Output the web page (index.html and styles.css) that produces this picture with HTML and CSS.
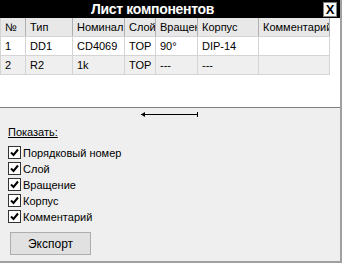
FILE: index.html
```html
<!DOCTYPE html>
<html lang="ru">
<head>
    <meta charset="UTF-8">
    <title>Лист компонентов</title>
    <link rel="stylesheet" href="styles.css">
</head>
<body>
    <div class="window">
        <div class="titlebar">
            <div class="title">Лист компонентов</div>
            <button class="close">X</button>
        </div>

        <div class="table-area">
            <table class="grid">
                <colgroup>
                    <col style="width:25px">
                    <col style="width:47px">
                    <col style="width:52px">
                    <col style="width:31px">
                    <col style="width:42px">
                    <col style="width:61px">
                    <col style="width:71px">
                </colgroup>
                <tr class="head">
                    <td>№</td><td>Тип</td><td>Номинал</td><td>Слой</td><td>Вращение</td><td>Корпус</td><td>Комментарий</td>
                </tr>
                <tr>
                    <td>1</td><td>DD1</td><td>CD4069</td><td>TOP</td><td>90°</td><td>DIP-14</td><td></td>
                </tr>
                <tr class="alt">
                    <td>2</td><td>R2</td><td>1k</td><td>TOP</td><td>---</td><td>---</td><td></td>
                </tr>
            </table>
        </div>

        <div class="panel">
            <div class="splitter">
                <svg width="60" height="7" viewBox="0 0 60 7">
                    <path d="M1 3.5 H58" stroke="#000" stroke-width="1"/>
                    <path d="M1 3.5 L5 1 V6 Z" fill="#000"/>
                    <path d="M57.5 1 V6" stroke="#000" stroke-width="1"/>
                </svg>
            </div>

            <div class="show-label">Показать:</div>

            <div class="options">
                <label class="opt"><span class="box"><svg width="11" height="11" viewBox="0 0 11 11"><path d="M2 5.5 L4.5 8 L9 2.5" fill="none" stroke="#000" stroke-width="2"/></svg></span>Порядковый номер</label>
                <label class="opt"><span class="box"><svg width="11" height="11" viewBox="0 0 11 11"><path d="M2 5.5 L4.5 8 L9 2.5" fill="none" stroke="#000" stroke-width="2"/></svg></span>Слой</label>
                <label class="opt"><span class="box"><svg width="11" height="11" viewBox="0 0 11 11"><path d="M2 5.5 L4.5 8 L9 2.5" fill="none" stroke="#000" stroke-width="2"/></svg></span>Вращение</label>
                <label class="opt"><span class="box"><svg width="11" height="11" viewBox="0 0 11 11"><path d="M2 5.5 L4.5 8 L9 2.5" fill="none" stroke="#000" stroke-width="2"/></svg></span>Корпус</label>
                <label class="opt"><span class="box"><svg width="11" height="11" viewBox="0 0 11 11"><path d="M2 5.5 L4.5 8 L9 2.5" fill="none" stroke="#000" stroke-width="2"/></svg></span>Комментарий</label>
            </div>

            <button class="export">Экспорт</button>
        </div>
    </div>
</body>
</html>
```

FILE: styles.css
```css
body {
    margin: 0;
    font-family: 'Liberation Sans', Arial, sans-serif;
    font-size: 11px;
    color: #000;
    background: #fff;
}

.window {
    width: 340px;
    height: 261px;
    border-right: 2px solid #a0a0a0;
    border-bottom: 2px solid #a0a0a0;
    display: flex;
    flex-direction: column;
}

.titlebar {
    height: 18px;
    background: #000;
    display: flex;
    align-items: center;
}

.title {
    flex: 1;
    text-align: center;
    color: #fff;
    font-weight: bold;
    font-size: 14px;
    letter-spacing: -0.3px;
    padding-right: 18px;
}

.close {
    width: 14px;
    height: 15px;
    margin-right: 3px;
    padding: 0;
    border: 1px solid #808080;
    background: #fff;
    font-family: 'Liberation Sans', Arial, sans-serif;
    font-weight: bold;
    font-size: 13px;
    line-height: 13px;
}

.table-area {
    height: 89px;
    background: #fff;
    border-bottom: 1px solid #808080;
}

.grid {
    border-collapse: collapse;
    table-layout: fixed;
    width: 329px;
}

.grid td {
    height: 18px;
    padding: 0 0 0 4px;
    border: 1px solid #d4d4d4;
    white-space: nowrap;
    overflow: hidden;
}

.grid .head td {
    background: #e8e8e8;
    border-top: none;
    border-right-color: #b0b0b0;
}

.grid .alt td {
    background: #efefef;
}

.panel {
    flex: 1;
    background: #efefef;
    padding: 0 8px;
}

.splitter {
    display: flex;
    justify-content: center;
    padding-top: 3px;
    height: 11px;
}

.show-label {
    margin-top: 4px;
    text-decoration: underline;
}

.options {
    margin-top: 8px;
    display: flex;
    flex-direction: column;
    gap: 3px;
}

.opt {
    display: flex;
    align-items: center;
    gap: 2px;
    height: 13px;
}

.box {
    width: 11px;
    height: 11px;
    border: 1px solid #333;
    background: #fff;
    display: flex;
}

.export {
    margin: 9px 0 0 2px;
    width: 81px;
    height: 23px;
    border: 1px solid #adadad;
    background: #e1e1e1;
    font-family: 'Liberation Sans', Arial, sans-serif;
    font-size: 12px;
}
```
